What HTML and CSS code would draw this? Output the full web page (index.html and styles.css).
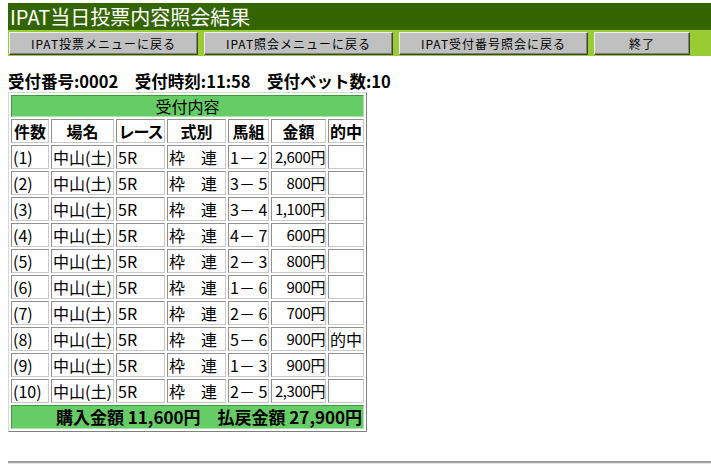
FILE: index.html
```html
<!DOCTYPE html>
<html lang="ja">
<head>
<meta charset="utf-8">
<title>IPAT当日投票内容照会結果</title>
<link rel="stylesheet" href="styles.css">
</head>
<body>
<div class="title">IPAT当日投票内容照会結果</div>
<div class="nav">
  <button class="btn wide">IPAT投票メニューに戻る</button>
  <button class="btn wide">IPAT照会メニューに戻る</button>
  <button class="btn wide">IPAT受付番号照会に戻る</button>
  <button class="btn narrow">終了</button>
</div>
<div class="info">受付番号:0002　受付時刻:11:58　受付ベット数:10</div>
<table class="bets">
  <colgroup>
    <col class="c1"><col class="c2"><col class="c3"><col class="c4"><col class="c5"><col class="c6"><col class="c7">
  </colgroup>
  <tr><th colspan="7" class="green cap">受付内容</th></tr>
  <tr class="head"><th>件数</th><th>場名</th><th>レース</th><th>式別</th><th>馬組</th><th>金額</th><th>的中</th></tr>
  <tr><td>(1)</td><td>中山(土)</td><td>5R</td><td>枠　連</td><td>1－ 2</td><td class="r">2,600円</td><td></td></tr>
  <tr><td>(2)</td><td>中山(土)</td><td>5R</td><td>枠　連</td><td>3－ 5</td><td class="r">800円</td><td></td></tr>
  <tr><td>(3)</td><td>中山(土)</td><td>5R</td><td>枠　連</td><td>3－ 4</td><td class="r">1,100円</td><td></td></tr>
  <tr><td>(4)</td><td>中山(土)</td><td>5R</td><td>枠　連</td><td>4－ 7</td><td class="r">600円</td><td></td></tr>
  <tr><td>(5)</td><td>中山(土)</td><td>5R</td><td>枠　連</td><td>2－ 3</td><td class="r">800円</td><td></td></tr>
  <tr><td>(6)</td><td>中山(土)</td><td>5R</td><td>枠　連</td><td>1－ 6</td><td class="r">900円</td><td></td></tr>
  <tr><td>(7)</td><td>中山(土)</td><td>5R</td><td>枠　連</td><td>2－ 6</td><td class="r">700円</td><td></td></tr>
  <tr><td>(8)</td><td>中山(土)</td><td>5R</td><td>枠　連</td><td>5－ 6</td><td class="r">900円</td><td>的中</td></tr>
  <tr><td>(9)</td><td>中山(土)</td><td>5R</td><td>枠　連</td><td>1－ 3</td><td class="r">900円</td><td></td></tr>
  <tr><td>(10)</td><td>中山(土)</td><td>5R</td><td>枠　連</td><td>2－ 5</td><td class="r">2,300円</td><td></td></tr>
  <tr><th colspan="7" class="green total">購入金額 11,600円　払戻金額 27,900円</th></tr>
</table>
<hr class="rule">
</body>
</html>
```
FILE: styles.css
```css
html, body {
  background: #ffffff;
}
body {
  margin: 3px 0 0 8px;
  font-family: "Noto Sans CJK JP", "Liberation Sans", sans-serif;
  color: #000;
}
.title {
  background: #336600;
  color: #ffffff;
  font-size: 20px;
  line-height: 27px;
  height: 27px;
  padding-left: 2px;
  white-space: nowrap;
}
.nav {
  background: #99cc33;
  height: 26px;
  display: flex;
  align-items: flex-start;
  gap: 6px;
  padding: 2px 0 0 1px;
  box-sizing: border-box;
}
.btn {
  height: 23px;
  background: #c0c0c0;
  border: 1px solid;
  border-color: #f0f0f0 #404040 #404040 #f0f0f0;
  box-shadow: inset -1px -1px 0 #808080;
  font-family: "Noto Sans CJK JP", sans-serif;
  font-size: 12px;
  padding: 0;
  color: #000;
  letter-spacing: 1px;
}
.btn.wide { width: 189px; }
.btn.narrow { width: 96px; }
.info {
  margin-top: 14px;
  font-size: 16.5px;
  font-weight: bold;
  line-height: 22px;
  height: 22px;
  white-space: nowrap;
}
.bets {
  margin-top: 0;
  border-collapse: separate;
  border-spacing: 2px;
  table-layout: fixed;
  width: 355px;
  border: 1px solid;
  border-color: #d8d8d8 #808080 #808080 #d8d8d8;
}
.c1 { width: 38px; }
.c2 { width: 63px; }
.c3 { width: 49px; }
.c4 { width: 59px; }
.c5 { width: 41px; }
.c6 { width: 55px; }
.c7 { width: 36px; }
.bets td, .bets th {
  border: 1px solid;
  border-color: #909090 #c8c8c8 #c8c8c8 #909090;
  padding: 0 1px;
  height: 22px;
  white-space: nowrap;
  font-size: 16px;
  line-height: 22px;
}
.bets td { font-weight: normal; text-align: left; }
.bets .head th {
  font-size: 16px;
  font-weight: bold;
  text-align: center;
  padding: 0;
}
.bets .head th:nth-child(3) { letter-spacing: -1px; }
.bets td.r {
  text-align: right;
  padding: 0;
  font-size: 15px;
  letter-spacing: -0.4px;
}
.bets th.green {
  background: #66cc66;
  border-color: #3d9a3d #a8e0a8 #a8e0a8 #3d9a3d;
}
.bets th.cap {
  height: 20px;
  line-height: 20px;
  font-size: 16px;
  font-weight: normal;
  text-align: center;
}
.bets th.total {
  font-size: 17px;
  font-weight: bold;
  text-align: right;
}
.rule {
  margin: 29px 0 0 0;
  border: none;
  border-top: 2px solid #a0a0a0;
  border-bottom: 1px solid #e8e8e8;
  height: 0;
}
```
